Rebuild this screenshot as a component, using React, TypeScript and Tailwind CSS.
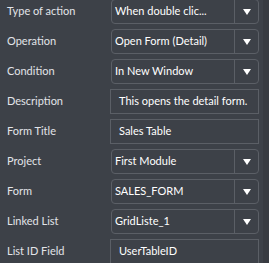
import React from 'react';

type Row = { label: string; value: string; kind: 'select' | 'text' };

const rows: Row[] = [
  { label: 'Type of action', value: 'When double clic...', kind: 'select' },
  { label: 'Operation', value: 'Open Form (Detail)', kind: 'select' },
  { label: 'Condition', value: 'In New Window', kind: 'select' },
  { label: 'Description', value: 'This opens the detail form.', kind: 'text' },
  { label: 'Form Title', value: 'Sales Table', kind: 'text' },
  { label: 'Project', value: 'First Module', kind: 'select' },
  { label: 'Form', value: 'SALES_FORM', kind: 'select' },
  { label: 'Linked List', value: 'GridListe_1', kind: 'select' },
  { label: 'List ID Field', value: 'UserTableID', kind: 'text' },
];

function Arrow() {
  return (
    <svg width="8" height="6" viewBox="0 0 8 6" className="block">
      <path d="M0 0 H8 L4 6 Z" fill="#ffffff" />
    </svg>
  );
}

function Field({ row }: { row: Row }) {
  if (row.kind === 'select') {
    return (
      <div className="flex h-[25px] w-[148px] items-stretch rounded-[4px] border border-[#5b5f66]">
        <div className="flex flex-1 items-center overflow-hidden whitespace-nowrap pl-[3px] text-white">
          {row.value}
        </div>
        <div className="flex w-[24px] items-center justify-center border-l border-[#5b5f66]">
          <Arrow />
        </div>
      </div>
    );
  }
  return (
    <div className="ml-[-1px] flex h-[25px] w-[149px] items-center overflow-hidden whitespace-nowrap border border-[#5b5f66] pl-[8px] text-white">
      {row.value}
    </div>
  );
}

export default function App() {
  return (
    <div
      className="flex h-[263px] w-[269px] overflow-hidden bg-[#3d4148] text-[11px]"
      style={{ fontFamily: 'Lato, "Noto Sans", sans-serif' }}
    >
      <div className="mt-[-1px] flex w-[263px] flex-col gap-[5px]">
        {rows.map((row) => (
          <div key={row.label} className="flex items-center">
            <div className="w-[111px] pl-[7px] text-[#e2e4e8]">{row.label}</div>
            <Field row={row} />
          </div>
        ))}
      </div>
      <div className="w-[6px] bg-[#383b41]" />
    </div>
  );
}
